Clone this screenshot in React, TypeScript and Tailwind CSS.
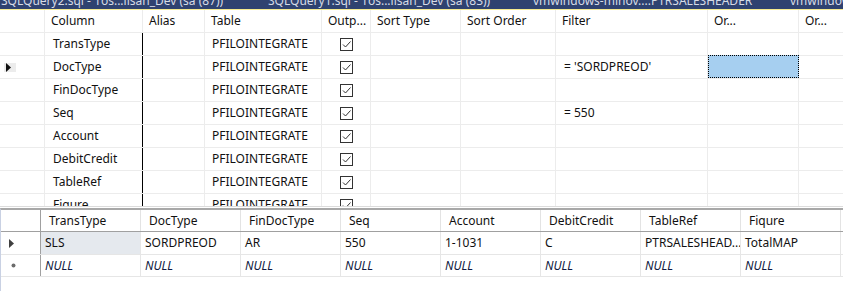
import React from 'react';

const font = { fontFamily: '"Noto Sans", "Open Sans", sans-serif' };

const topCols = [
  { name: 'Column', w: 'w-[98px]' },
  { name: 'Alias', w: 'w-[62px]' },
  { name: 'Table', w: 'w-[117px]' },
  { name: 'Outp...', w: 'w-[49px]' },
  { name: 'Sort Type', w: 'w-[90px]' },
  { name: 'Sort Order', w: 'w-[95px]' },
  { name: 'Filter', w: 'w-[152px]' },
  { name: 'Or...', w: 'w-[91px]' },
  { name: 'Or...', w: 'w-[60px]' },
];

const topRows = [
  { col: 'TransType', filter: '' },
  { col: 'DocType', filter: "= 'SORDPREOD'", current: true },
  { col: 'FinDocType', filter: '' },
  { col: 'Seq', filter: '= 550' },
  { col: 'Account', filter: '' },
  { col: 'DebitCredit', filter: '' },
  { col: 'TableRef', filter: '' },
  { col: 'Figure', filter: '' },
];

const resultCols = ['TransType', 'DocType', 'FinDocType', 'Seq', 'Account', 'DebitCredit', 'TableRef', 'Fiqure'];
const resultRow = ['SLS', 'SORDPREOD', 'AR', '550', '1-1031', 'C', 'PTRSALESHEAD...', 'TotalMAP'];

function CheckBox() {
  return (
    <div className="w-[13px] h-[13px] border border-[#333] bg-white flex items-center justify-center">
      <svg width="11" height="11" viewBox="0 0 11 11">
        <path d="M2 5.5 L4.5 8 L9.5 2.5" fill="none" stroke="#333" strokeWidth="1" />
      </svg>
    </div>
  );
}

function Arrow() {
  return (
    <svg width="5" height="9" viewBox="0 0 5 9">
      <path d="M0 0 L5 4.5 L0 9 Z" fill="#111" />
    </svg>
  );
}

function TabBar() {
  return (
    <div className="h-[9px] bg-[#2f4270] overflow-hidden relative text-[12px] text-[#d6dbe6] whitespace-nowrap">
      <span className="absolute left-[1px] top-[-8px]">SQLQuery2.sql - 1os...ilsan_Dev (sa (87))</span>
      <span className="absolute left-[268px] top-[-8px]">SQLQuery1.sql - 1os...ilsan_Dev (sa (83))</span>
      <span className="absolute left-[533px] top-[-8px]">vmwindows-minov....PTRSALESHEADER</span>
      <span className="absolute left-[790px] top-[-8px]">vmwindows</span>
    </div>
  );
}

function DesignGrid() {
  return (
    <div className="h-[197px] overflow-hidden border-b border-[#dcdcdc]">
      <div className="flex h-[23px] border-b border-[#ececec]">
        <div className="w-[45px] shrink-0 border-r border-[#ececec]" />
        {topCols.map((c, i) => (
          <div key={i} className={`${c.w} shrink-0 border-r border-[#ececec] pl-[6px] flex items-center`}>
            {c.name}
          </div>
        ))}
      </div>
      {topRows.map((r, i) => (
        <div key={i} className="flex h-[23px] border-b border-[#ececec]">
          <div className="w-[45px] shrink-0 border-r border-[#ececec] flex items-center">
            {r.current && (
              <div className="ml-[4px] w-[12px] h-[9px] bg-[#ececec] flex items-center pl-[2px]">
                <Arrow />
              </div>
            )}
          </div>
          <div className="w-[98px] shrink-0 border-r border-black pl-[8px] flex items-center">{r.col}</div>
          <div className="w-[62px] shrink-0 border-r border-[#ececec]" />
          <div className="w-[117px] shrink-0 border-r border-[#ececec] pl-[7px] flex items-center">PFILOINTEGRATE</div>
          <div className="w-[49px] shrink-0 border-r border-[#ececec] flex items-center justify-center">
            <CheckBox />
          </div>
          <div className="w-[90px] shrink-0 border-r border-[#ececec]" />
          <div className="w-[95px] shrink-0 border-r border-[#ececec]" />
          <div className="w-[152px] shrink-0 border-r border-[#ececec] pl-[8px] flex items-center">{r.filter}</div>
          <div className="w-[91px] shrink-0 border-r border-[#ececec] relative">
            {r.current && (
              <div className="absolute left-0 top-[-1px] right-[-1px] bottom-0 bg-[#a6cff0] border border-dotted border-black" />
            )}
          </div>
          <div className="w-[60px] shrink-0 border-r border-[#ececec]" />
        </div>
      ))}
    </div>
  );
}

function Star() {
  return (
    <svg width="5" height="5" viewBox="0 0 5 5">
      <circle cx="2.5" cy="2.5" r="2" fill="#6b6b6b" />
    </svg>
  );
}

function ResultsGrid() {
  return (
    <div className="flex-1 border-t-2 border-[#a8a8a8] border-l border-l-[#c9d1e3]">
      <div className="flex h-[22px] border-b border-[#a0a0a0]">
        <div className="w-[40px] shrink-0 border-r border-[#a0a0a0]" />
        {resultCols.map((c) => (
          <div key={c} className="w-[100px] shrink-0 border-r border-[#e3e3e3] pl-[8px] flex items-center">
            {c}
          </div>
        ))}
      </div>
      <div className="flex h-[23px] border-b border-[#e6e6e6]">
        <div className="w-[40px] shrink-0 border-r border-[#a0a0a0] flex items-center pl-[8px]">
          <svg width="5" height="9" viewBox="0 0 5 9">
            <path d="M0 0 L5 4.5 L0 9 Z" fill="#404040" />
          </svg>
        </div>
        {resultRow.map((v, i) => (
          <div
            key={i}
            className={`w-[100px] shrink-0 border-r border-[#e6e6e6] pl-[4px] flex items-center whitespace-nowrap overflow-hidden ${i === 0 ? 'bg-[#e5e9ee]' : ''}`}
          >
            {v}
          </div>
        ))}
      </div>
      <div className="flex h-[22px] border-b border-[#e6e6e6]">
        <div className="w-[40px] shrink-0 border-r border-[#a0a0a0] flex items-center pl-[10px]">
          <Star />
        </div>
        {resultCols.map((c) => (
          <div key={c} className="w-[100px] shrink-0 border-r border-[#e6e6e6] pl-[4px] flex items-center italic text-[#101840]">
            NULL
          </div>
        ))}
      </div>
    </div>
  );
}

export default function App() {
  return (
    <div className="w-[843px] h-[291px] bg-white overflow-hidden flex flex-col text-[12px] text-[#111]" style={font}>
      <TabBar />
      <div className="h-[1px] bg-[#f5ea8f]" />
      <DesignGrid />
      <div className="h-[1px] bg-white" />
      <ResultsGrid />
    </div>
  );
}
